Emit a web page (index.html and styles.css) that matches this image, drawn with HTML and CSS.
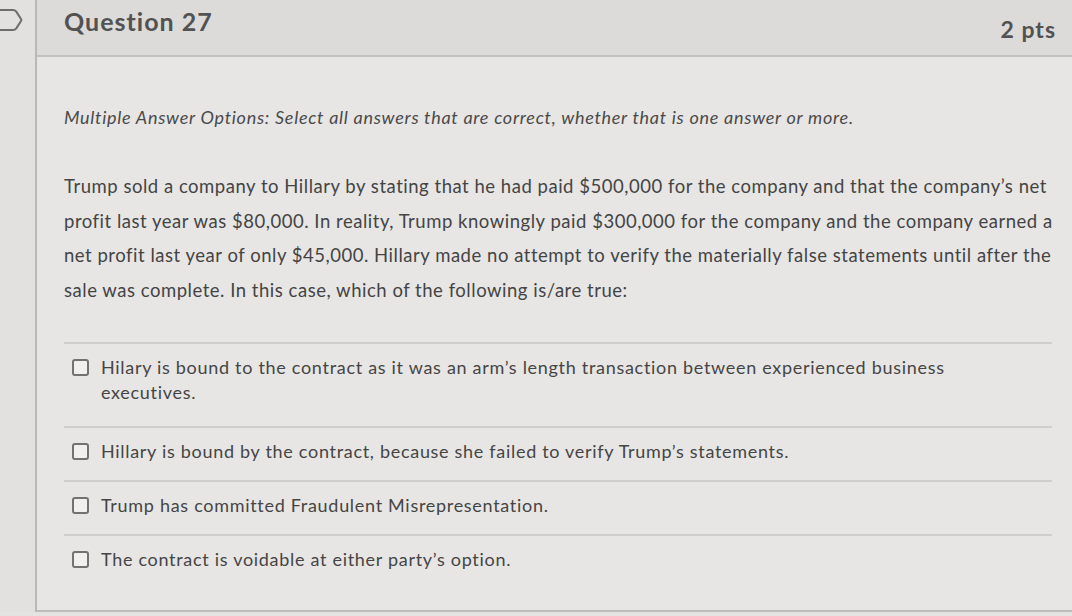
FILE: index.html
```html
<!DOCTYPE html>
<html lang="en">
<head>
<meta charset="utf-8">
<title>Question 27</title>
<link rel="stylesheet" href="styles.css">
</head>
<body>
<div class="page">
  <div class="gutter">
    <svg class="flag" width="24" height="26" viewBox="0 0 24 26" aria-hidden="true">
      <path d="M-4 3 H13 Q15 3 16.3 4.6 L21 12 Q21.8 13 21 14 L16.3 21.4 Q15 23 13 23 H-4" fill="none" stroke="#6d6d6b" stroke-width="2" stroke-linejoin="round"/>
    </svg>
  </div>
  <div class="question">
    <div class="q-header">
      <h2 class="q-title">Question 27</h2>
      <span class="q-points">2 pts</span>
    </div>
    <div class="q-body">
      <p class="instructions">Multiple Answer Options: Select all answers that are correct, whether that is one answer or more.</p>
      <p class="prompt">Trump sold a company to Hillary by stating that he had paid $500,000 for the company and that the company’s net profit last year was $80,000. In reality, Trump knowingly paid $300,000 for the company and the company earned a net profit last year of only $45,000. Hillary made no attempt to verify the materially false statements until after the sale was complete. In this case, which of the following is/are true:</p>
      <div class="answers">
        <label class="answer answer-first"><span class="box"></span><span class="answer-text">Hilary is bound to the contract as it was an arm’s length transaction between experienced business executives.</span></label>
        <label class="answer"><span class="box"></span><span class="answer-text">Hillary is bound by the contract, because she failed to verify Trump’s statements.</span></label>
        <label class="answer"><span class="box"></span><span class="answer-text">Trump has committed Fraudulent Misrepresentation.</span></label>
        <label class="answer answer-last"><span class="box"></span><span class="answer-text">The contract is voidable at either party’s option.</span></label>
      </div>
    </div>
  </div>
</div>
</body>
</html>
```

FILE: styles.css
```css
html, body {
  margin: 0;
  padding: 0;
}
body {
  background: #e4e3e1;
  font-family: Lato, "Open Sans", sans-serif;
  color: #474747;
  width: 1072px;
  height: 616px;
  overflow: hidden;
}
.page {
  display: flex;
  height: 612px;
}
.gutter {
  width: 35px;
  flex: none;
  background: #e2e1df;
}
.flag {
  display: block;
  margin-top: 7px;
}
.question {
  flex: 1;
  border-left: 2px solid #b9b8b6;
  border-bottom: 2px solid #bdbcba;
  background: #e7e6e4;
  display: flex;
  flex-direction: column;
}
.q-header {
  height: 57px;
  box-sizing: border-box;
  background: #dcdbd9;
  border-bottom: 2px solid #c2c1bf;
  display: flex;
  justify-content: space-between;
  align-items: flex-start;
  padding: 0 16px 0 27px;
}
.q-title {
  margin: 0;
  padding-top: 5px;
  font-size: 25px;
  font-weight: 700;
  letter-spacing: 1px;
  color: #525252;
  line-height: 32px;
}
.q-points {
  padding-top: 14px;
  font-size: 23px;
  font-weight: 700;
  letter-spacing: 1px;
  color: #525252;
  line-height: 30px;
}
.q-body {
  padding: 0 20px 0 27px;
}
.instructions {
  margin: 48px 0 0;
  font-style: italic;
  font-size: 18px;
  letter-spacing: 0.72px;
  line-height: 24px;
  color: #4a4a4a;
}
.prompt {
  margin: 40px -14px 0 0;
  font-size: 18.5px;
  letter-spacing: 0.52px;
  line-height: 34.5px;
  color: #444;
}
.answers {
  margin-top: 35px;
}
.answer {
  display: flex;
  align-items: flex-start;
  border-top: 2px solid #cfcecc;
  padding: 11px 0 16px 8px;
  font-size: 18px;
  letter-spacing: 0.7px;
  line-height: 25px;
  color: #454545;
}
.answer-first {
  padding-bottom: 21px;
}
.answer-text {
  max-width: 900px;
}
.box {
  flex: none;
  width: 13px;
  height: 13px;
  border: 2px solid #727270;
  border-radius: 3px;
  background: #f1f0ee;
  margin-top: 4px;
  margin-right: 12px;
}
```
